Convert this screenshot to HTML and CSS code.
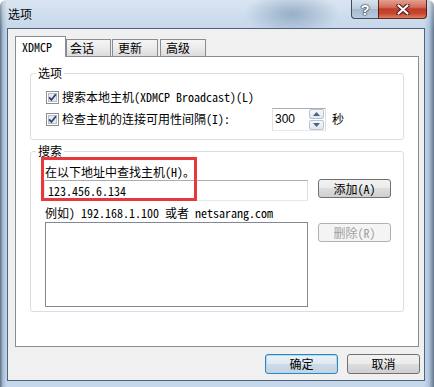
FILE: index.html
```html
<!doctype html>
<html>
    <head>
        <meta charset="UTF-8">
        <title>选项</title>
        <link rel="stylesheet" href="styles.css">
    </head>
    <body>
        <div class="window">
            <div class="titlebar">
                <span class="title">选项</span>
                <div class="caption">
                    <span class="cap help">?</span>
                    <span class="cap close">
                        <svg width="14" height="11" viewBox="0 0 14 11">
                            <path d="M2.5 1.5L11.5 9.5M11.5 1.5L2.5 9.5" stroke="#4a1c14" stroke-width="4.2" stroke-linecap="round"/>
                            <path d="M2.5 1.5L11.5 9.5M11.5 1.5L2.5 9.5" stroke="#fff" stroke-width="2.2" stroke-linecap="round"/>
                        </svg>
                    </span>
                </div>
            </div>

            <div class="client">
                <div class="tabs">
                    <span class="tab active en">XDMCP</span>
                    <span class="tab second">会话</span>
                    <span class="tab third">更新</span>
                    <span class="tab fourth">高级</span>
                </div>

                <div class="panel">
                    <fieldset class="group">
                        <legend>选项</legend>
                        <div class="opts-body">
                            <div class="check-row">
                                <svg class="check" width="13" height="13" viewBox="0 0 13 13">
                                    <rect x=".5" y=".5" width="12" height="12" fill="#fff" stroke="#8f8f8f"/>
                                    <rect x="2.5" y="2.5" width="8" height="8" fill="#e4e8ee" stroke="#b8bfc8"/>
                                    <path d="M3.2 6.4l2.2 2.6L9.9 3.2" fill="none" stroke="#2c3c68" stroke-width="1.7"/>
                                </svg>
                                <span>搜索本地主机<span class="en">(XDMCP Broadcast)(L)</span></span>
                            </div>
                            <div class="check-row">
                                <svg class="check" width="13" height="13" viewBox="0 0 13 13">
                                    <rect x=".5" y=".5" width="12" height="12" fill="#fff" stroke="#8f8f8f"/>
                                    <rect x="2.5" y="2.5" width="8" height="8" fill="#e4e8ee" stroke="#b8bfc8"/>
                                    <path d="M3.2 6.4l2.2 2.6L9.9 3.2" fill="none" stroke="#2c3c68" stroke-width="1.7"/>
                                </svg>
                                <span class="check-label">检查主机的连接可用性间隔<span class="en">(I):</span></span>
                                <div class="spin">
                                    <span class="spin-value">300</span>
                                    <div class="spin-btns">
                                        <span class="spin-btn">
                                            <svg width="7" height="4" viewBox="0 0 7 4"><path d="M0 4L3.5 0L7 4z" fill="#4d6185"/></svg>
                                        </span>
                                        <span class="spin-btn">
                                            <svg width="7" height="4" viewBox="0 0 7 4"><path d="M0 0L3.5 4L7 0z" fill="#4d6185"/></svg>
                                        </span>
                                    </div>
                                </div>
                                <span class="unit">秒</span>
                            </div>
                        </div>
                    </fieldset>

                    <fieldset class="group">
                        <legend>搜索</legend>
                        <div class="search-body">
                            <div class="target">
                                <div class="field-label">在以下地址中查找主机<span class="en">(H)</span>。</div>
                                <div class="field-row">
                                    <input class="text-input" type="text" value="123.456.6.134">
                                    <button class="btn">添加<span class="en">(A)</span></button>
                                </div>
                                <div class="mark"></div>
                            </div>
                            <div class="hint">例如<span class="en">) 192.168.1.100 </span>或者<span class="en"> netsarang.com</span></div>
                            <div class="list-row">
                                <div class="listbox"></div>
                                <button class="btn" disabled>删除<span class="en">(R)</span></button>
                            </div>
                        </div>
                    </fieldset>
                </div>

                <div class="footer">
                    <button class="btn default">确定</button>
                    <button class="btn">取消</button>
                </div>
            </div>
        </div>
    </body>
</html>
```

FILE: styles.css
```css
:root {
    --ui: "Noto Sans CJK SC", "Liberation Sans", sans-serif;
    --mono: "Noto Sans Mono CJK SC", "Liberation Mono", monospace;
    --tab-border: #898c95;
}

* {
    box-sizing: border-box;
}

html, body {
    margin: 0;
    background: #fff;
}

body {
    font: 12px/16px var(--ui);
    color: #000;
}

.en {
    font-family: var(--mono);
}

/* window frame */
.window {
    width: 434px;
    height: 387px;
    padding: 0 9px 6px 7px;
    display: flex;
    flex-direction: column;
    border-radius: 6px 6px 0 0;
    background:
        radial-gradient(ellipse 48px 22px at 292px 14px, rgba(105, 135, 168, .55), rgba(105, 135, 168, 0)),
        linear-gradient(to bottom, rgba(255, 255, 255, .35), rgba(255, 255, 255, 0) 30px),
        linear-gradient(to right, #5d6f83 0, #a7bdd5 3px, #c5d7ea 7px, #c5d7ea 424px, #aec4dc 429px, #62748a 100%);
}

.titlebar {
    height: 28px;
    flex: none;
    display: flex;
    align-items: flex-start;
}

.title {
    padding: 6px 0 0 1px;
}

.caption {
    margin-left: auto;
    margin-right: -2px;
    display: flex;
}

.cap {
    height: 19px;
    display: flex;
    align-items: center;
    justify-content: center;
    border: 1px solid rgba(38, 52, 72, .85);
    border-top: none;
}

.help {
    width: 27px;
    border-right: none;
    border-radius: 0 0 0 4px;
    background: linear-gradient(#d9e3ee, #bccadb 50%, #a6b8cd 50%, #b9cadd);
    color: #fff;
    font: bold 15px/1 "Liberation Sans", sans-serif;
    text-shadow: 0 0 2px #223044, 0 0 1px #223044, 0 0 1px #223044;
}

.close {
    width: 49px;
    border-radius: 0 0 4px 0;
    border-color: rgba(70, 24, 18, .85);
    background: linear-gradient(#e3a090, #d26c5a 40%, #bf3b27 50%, #c84630 75%, #de7f62);
}

/* client area */
.client {
    flex: 1;
    display: flex;
    flex-direction: column;
    padding-top: 7px;
    border: 1px solid #4f6278;
    background: #f0f0f0;
}

.tabs {
    display: flex;
    align-items: flex-end;
    height: 20px;
    margin-left: 7px;
}

.tab {
    width: 46px;
    height: 17px;
    padding-left: 5px;
    border: 1px solid var(--tab-border);
    border-bottom: none;
    background: linear-gradient(#f5f5f5, #ebebeb 50%, #dcdcdc);
}

.tab.active {
    width: 51px;
    height: 21px;
    margin-bottom: -1px;
    padding-left: 6px;
    line-height: 20px;
    background: #fff;
    position: relative;
    z-index: 1;
}

.tab.second {
    width: 45px;
    padding-left: 3px;
}

.tab.third {
    margin-left: 1px;
}

.tab.fourth {
    margin-left: 2px;
}

.panel {
    width: 404px;
    height: 291px;
    margin-left: 7px;
    padding: 9px 14px 0;
    border: 1px solid var(--tab-border);
    background: #fff;
}

.group {
    margin: 0;
    padding: 0;
    min-width: 0;
    border: 1px solid #d5dfe5;
    border-radius: 3px;
}

.group + .group {
    margin-top: 4px;
}

.group legend {
    margin-left: 5px;
    padding: 0 2px;
    line-height: 14px;
}

.opts-body {
    padding: 6px 0 9px 15px;
}

.check-row {
    display: flex;
    align-items: center;
    height: 22px;
}

.check {
    flex: none;
    margin-right: 3px;
}

.check-label {
    width: 210px;
}

.spin {
    display: flex;
    align-items: center;
    width: 54px;
    height: 23px;
    padding: 0 1px 0 2px;
    border: 1px solid;
    border-color: #abadb3 #dbdfe6 #e3e9ef #e2e3ea;
    background: #fff;
}

.spin-value {
    flex: 1;
    font: 12px/16px "Liberation Sans", sans-serif;
}

.spin-btns {
    display: flex;
    flex-direction: column;
    gap: 1px;
}

.spin-btn {
    width: 15px;
    height: 10px;
    display: flex;
    align-items: center;
    justify-content: center;
    border: 1px solid #b8c4d2;
    border-radius: 2px;
    background: linear-gradient(#f6f8fa, #e2e7ed);
}

.unit {
    margin-left: 6px;
}

.search-body {
    padding: 6px 0 4px 13px;
}

.target {
    position: relative;
}

.field-label {
    padding-left: 1px;
}

.field-row {
    display: flex;
    align-items: flex-start;
}

.text-input {
    width: 264px;
    height: 21px;
    padding: 0 0 0 3px;
    border: 1px solid;
    border-color: #abadb3 #dbdfe6 #e3e9ef #e2e3ea;
    font: 12px/16px var(--mono);
    color: #000;
    outline: none;
}

.mark {
    position: absolute;
    left: -3px;
    top: -7px;
    width: 156px;
    height: 44px;
    border: 3px solid #e8383d;
}

.hint {
    margin-top: 4px;
    padding-left: 1px;
}

.list-row {
    display: flex;
    align-items: flex-start;
    margin-top: 1px;
}

.listbox {
    width: 263px;
    height: 85px;
    margin-left: 1px;
    border: 1px solid #828790;
    background: #fff;
}

/* buttons */
.btn {
    width: 73px;
    height: 19px;
    padding: 0;
    border: 1px solid #707070;
    border-radius: 3px;
    background: linear-gradient(#f2f2f2, #ebebeb 50%, #dddddd 50%, #cfcfcf);
    font: 12px/16px var(--ui);
    color: #000;
}

.field-row .btn {
    margin: -1px 0 0 10px;
}

.list-row .btn {
    margin: 1px 0 0 10px;
}

.btn:disabled {
    color: #a0a0a0;
    border-color: #adb2b5;
    background: #f4f4f4;
}

.footer {
    display: flex;
    justify-content: flex-end;
    gap: 9px;
    margin-top: 7px;
    padding-right: 4px;
}

.footer .btn {
    height: 20px;
}

.btn.default {
    border-color: #3c7fb1;
    background: linear-gradient(#eaf3fa, #dde9f3 50%, #cddbe8 50%, #c3d3e2);
    box-shadow: inset 0 0 0 1px #a9dcf5;
}
```
